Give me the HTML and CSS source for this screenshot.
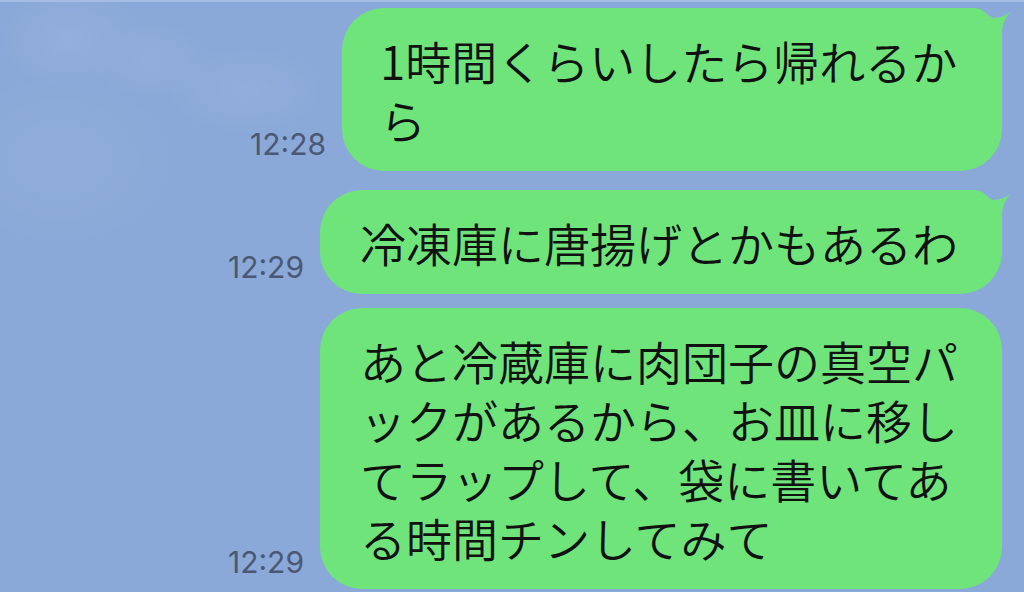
FILE: index.html
```html
<!DOCTYPE html>
<html lang="ja">
<head>
  <meta charset="UTF-8">
  <meta name="viewport" content="width=device-width, initial-scale=1.0">
  <title>トーク</title>
  <link rel="stylesheet" href="styles.css">
</head>
<body>

  <div class="chat">
    <div class="row first">
      <span class="time">12:28</span>
      <div class="bubble narrow">
        1時間くらいしたら帰れるから
        <svg class="horn" width="52" height="52" viewBox="0 0 52 52">
          <path d="M0 0 L15 0 C24 0 28 9 33 10 C40 10 46 7 50 4 C44 12 42 18 42 26 L42 52 L0 52 Z" />
        </svg>
      </div>
    </div>

    <div class="row first">
      <span class="time">12:29</span>
      <div class="bubble">
        冷凍庫に唐揚げとかもあるわ
        <svg class="horn" width="52" height="52" viewBox="0 0 52 52">
          <path d="M0 0 L15 0 C24 0 28 9 33 10 C40 10 46 7 50 4 C44 12 42 18 42 26 L42 52 L0 52 Z" />
        </svg>
      </div>
    </div>

    <div class="row">
      <span class="time">12:29</span>
      <div class="bubble">
        あと冷蔵庫に肉団子の真空パックがあるから、お皿に移してラップして、袋に書いてある時間チンしてみて
      </div>
    </div>
  </div>

</body>
</html>
```

FILE: styles.css
```css
body {
  margin: 0;
  padding: 0;
  height: 592px;
  overflow: hidden;
  background-color: #8ba9d8;
  background-image:
    radial-gradient(ellipse 70px 50px at 70px 40px, rgba(255,255,255,0.07), transparent),
    radial-gradient(ellipse 60px 40px at 150px 60px, rgba(255,255,255,0.06), transparent),
    radial-gradient(ellipse 80px 45px at 245px 90px, rgba(255,255,255,0.06), transparent),
    radial-gradient(ellipse 120px 90px at 60px 160px, rgba(255,255,255,0.04), transparent);
  border-top: 2px solid #a7bce3;
  box-sizing: border-box;
  font-family: "Noto Sans CJK JP", "Noto Sans", sans-serif;
}

.chat {
  display: flex;
  flex-direction: column;
  padding: 6px 22px 0 0;
}

.row {
  display: flex;
  justify-content: flex-end;
  align-items: flex-end;
  gap: 16px;
  margin-top: 14px;
}

.row.first {
  margin-top: 19px;
}

.row:first-child {
  margin-top: 0;
}

.time {
  font-family: "Inter", "Liberation Sans", sans-serif;
  font-size: 30px;
  line-height: 1;
  color: #4a5873;
  margin-bottom: 12px;
}

.bubble {
  position: relative;
  box-sizing: border-box;
  width: 682px;
  padding: 23px 40px 22px 40px;
  background-color: #6fe47b;
  border-radius: 42px;
  color: #111;
  font-size: 46px;
  font-weight: 350;
  line-height: 59px;
  line-break: loose;
}

.bubble.narrow {
  width: 660px;
  padding-left: 38px;
}

.horn {
  position: absolute;
  top: 0;
  right: -10px;
  fill: #6fe47b;
}
```
